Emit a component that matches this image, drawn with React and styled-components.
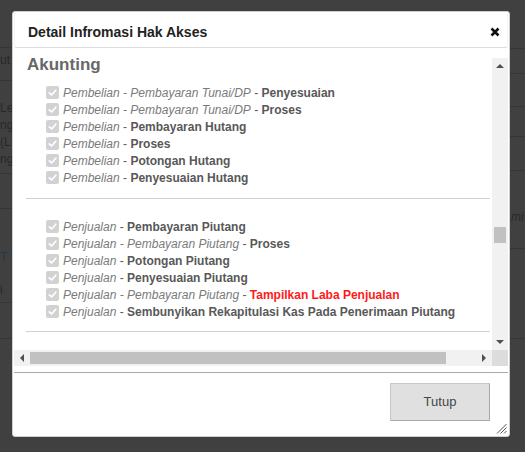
import React from 'react';
import styled, { createGlobalStyle } from 'styled-components';

const GlobalStyle = createGlobalStyle`
  html, body { margin: 0; padding: 0; }
  body {
    background: #404040;
    font-family: "Liberation Sans", Arial, sans-serif;
  }
`;

/* ---------- dimmed page behind the dialog ---------- */
const Page = styled.div`
  position: relative;
  width: 525px;
  height: 452px;
  overflow: hidden;
  background: #404040;
  display: flex;
  justify-content: space-between;
  align-items: flex-start;
`;

const Strip = styled.div`
  width: ${(p) => p.$w}px;
  display: flex;
  flex-direction: column;
`;

const StripRow = styled.div`
  box-sizing: border-box;
  height: ${(p) => p.$h}px;
  padding-top: ${(p) => p.$pt || 0}px;
  padding-left: ${(p) => p.$pl || 0}px;
  border-bottom: 1px solid #353535;
  display: flex;
  flex-direction: column;
  gap: ${(p) => p.$gap || 0}px;
  font-size: 12px;
  line-height: 17px;
  white-space: nowrap;
`;

const StripText = styled.span`
  color: ${(p) => (p.$link ? '#22384a' : '#282828')};
  font-style: ${(p) => (p.$italic ? 'italic' : 'normal')};
`;

const leftRows = [
  { h: 48 },
  { h: 33, pt: 4, lines: ['ut'] },
  { h: 93, pt: 19, lines: ['Le', 'ng', '(L', 'ng'] },
  { h: 35 },
  { h: 94, pt: 40, gap: 16, lines: ['T T', 'i'], link: true },
  { h: 36 },
];

const rightRows = [
  { h: 49 },
  { h: 25 },
  { h: 33 },
  { h: 30 },
  { h: 34 },
  { h: 78, pt: 38, lines: ['mi'], italic: true },
  { h: 90 },
];

/* ---------- dialog ---------- */
const Dialog = styled.div`
  position: absolute;
  top: 11px;
  left: 12px;
  width: 498px;
  height: 426px;
  box-sizing: border-box;
  background: #fff;
  border: 1px solid #cfcfcf;
  border-radius: 3px;
  padding: 1px;
  display: flex;
  flex-direction: column;
`;

const TitleBar = styled.div`
  box-sizing: border-box;
  height: 35px;
  padding: 3px 7px 0 13px;
  display: flex;
  align-items: center;
  justify-content: space-between;
  border: 1px solid #f4f4f4;
  border-bottom-color: #dddddd;
  border-top: none;
  border-radius: 0 0 3px 3px;
  font-size: 14px;
  font-weight: bold;
  color: #222;
`;

const CloseButton = styled.span`
  display: flex;
  width: 10px;
  height: 10px;
`;

const Body = styled.div`
  padding-top: 10px;
  margin-bottom: 6px;
`;

const ScrollFrame = styled.div`
  display: grid;
  grid-template-columns: 1fr 16px;
  grid-template-rows: 292px 16px;
`;

const Viewport = styled.div`
  overflow: hidden;
`;

const Content = styled.div`
  padding-left: 12px;
  padding-right: 2px;
`;

const Heading = styled.h3`
  margin: -2px 0 11px 1px;
  font-size: 17px;
  line-height: 17px;
  font-weight: bold;
  color: #686868;
`;

const List = styled.div`
  display: flex;
  flex-direction: column;
  padding-left: 20px;
`;

const Row = styled.div`
  height: 17px;
  display: flex;
  align-items: center;
  gap: 4px;
  font-size: 12px;
  white-space: nowrap;
`;

const Check = styled.span`
  box-sizing: border-box;
  width: 13px;
  height: 13px;
  border-radius: 2px;
  background: #d2d2d2;
  display: flex;
  align-items: center;
  justify-content: center;
  flex: none;
`;

const Label = styled.span`
  color: #5a5a5a;
`;

const PathText = styled.i`
  color: #7a7a7a;
`;

const Leaf = styled.b`
  color: ${(p) => (p.$red ? '#ff1a1a' : '#585858')};
`;

const Separator = styled.div`
  height: 1px;
  background: #d0d0d0;
  margin: ${(p) => p.$m};
`;

const VBar = styled.div`
  background: #f1f1f1;
  display: flex;
  flex-direction: column;
`;

const HBar = styled.div`
  background: #f1f1f1;
  display: flex;
`;

const Corner = styled.div`
  background: #dcdcdc;
`;

const ArrowBox = styled.div`
  width: 16px;
  height: 16px;
  flex: none;
  display: flex;
  align-items: center;
  justify-content: center;
`;

const VTrack = styled.div`
  flex: 1;
  padding-top: ${(p) => p.$offset}px;
  display: flex;
  flex-direction: column;
  align-items: center;
`;

const HTrack = styled.div`
  flex: 1;
  padding-left: ${(p) => p.$offset}px;
  display: flex;
  align-items: center;
`;

const Thumb = styled.div`
  background: #c1c1c1;
  width: ${(p) => p.$w}px;
  height: ${(p) => p.$h}px;
`;

const ButtonPane = styled.div`
  flex: 1;
  border-top: 1px solid #aaaaaa;
  display: flex;
  justify-content: flex-end;
  align-items: flex-start;
  padding: 10px 18px 0 0;
`;

const Button = styled.button`
  box-sizing: border-box;
  width: 100px;
  height: 38px;
  background: #e0e0e0;
  border: 1px solid #c8c8c8;
  border-right-color: #a8a8a8;
  border-bottom-color: #a8a8a8;
  border-radius: 1px;
  font-family: "Liberation Sans", Arial, sans-serif;
  font-size: 13px;
  color: #454545;
  padding: 0 0 1px;
`;

const Grip = styled.span`
  position: absolute;
  right: 2px;
  bottom: 2px;
  width: 11px;
  height: 11px;
  display: flex;
`;

const Arrow = ({ dir }) => {
  const pts = {
    up: '0,4 8,4 4,0',
    down: '0,0 8,0 4,4',
    left: '4,0 4,8 0,4',
    right: '0,0 0,8 4,4',
  }[dir];
  const vertical = dir === 'up' || dir === 'down';
  return (
    <svg width={vertical ? 8 : 4} height={vertical ? 4 : 8} viewBox={vertical ? '0 0 8 4' : '0 0 4 8'}>
      <polygon points={pts} fill="#505050" />
    </svg>
  );
};

const sections = [
  [
    { path: ['Pembelian', 'Pembayaran Tunai/DP'], leaf: 'Penyesuaian' },
    { path: ['Pembelian', 'Pembayaran Tunai/DP'], leaf: 'Proses' },
    { path: ['Pembelian'], leaf: 'Pembayaran Hutang' },
    { path: ['Pembelian'], leaf: 'Proses' },
    { path: ['Pembelian'], leaf: 'Potongan Hutang' },
    { path: ['Pembelian'], leaf: 'Penyesuaian Hutang' },
  ],
  [
    { path: ['Penjualan'], leaf: 'Pembayaran Piutang' },
    { path: ['Penjualan', 'Pembayaran Piutang'], leaf: 'Proses' },
    { path: ['Penjualan'], leaf: 'Potongan Piutang' },
    { path: ['Penjualan'], leaf: 'Penyesuaian Piutang' },
    { path: ['Penjualan', 'Pembayaran Piutang'], leaf: 'Tampilkan Laba Penjualan', red: true },
    { path: ['Penjualan'], leaf: 'Sembunyikan Rekapitulasi Kas Pada Penerimaan Piutang' },
  ],
];

const CheckMark = () => (
  <Check>
    <svg width="11" height="11" viewBox="0 0 11 11">
      <path d="M2.3 5.8 L4.6 8 L8.8 3.2" fill="none" stroke="#fff" strokeWidth="1.7" strokeLinecap="round" strokeLinejoin="round" />
    </svg>
  </Check>
);

export default function App() {
  return (
    <>
      <GlobalStyle />
      <Page>
        <Strip $w={40}>
          {leftRows.map((r, i) => (
            <StripRow key={i} $h={r.h} $pt={r.pt} $gap={r.gap}>
              {(r.lines || []).map((l, j) => (
                <StripText key={j} $link={r.link && j === 0}>{l}</StripText>
              ))}
            </StripRow>
          ))}
        </Strip>
        <Strip $w={15}>
          {rightRows.map((r, i) => (
            <StripRow key={i} $h={r.h} $pt={r.pt} $pl={1}>
              {(r.lines || []).map((l) => (
                <StripText key={l} $italic={r.italic}>{l}</StripText>
              ))}
            </StripRow>
          ))}
        </Strip>

        <Dialog>
          <TitleBar>
            <span>Detail Infromasi Hak Akses</span>
            <CloseButton>
              <svg width="10" height="10" viewBox="0 0 10 10">
                <path d="M1.5 1.5 L8.5 8.5 M8.5 1.5 L1.5 8.5" stroke="#111" strokeWidth="2.6" strokeLinecap="butt" />
              </svg>
            </CloseButton>
          </TitleBar>

          <Body>
            <ScrollFrame>
              <Viewport>
                <Content>
                  <Heading>Akunting</Heading>
                  {sections.map((items, si) => (
                    <React.Fragment key={si}>
                      <List>
                        {items.map((it, i) => (
                          <Row key={i}>
                            <CheckMark />
                            <Label>
                              <PathText>{it.path.join(' - ')}</PathText>
                              {' - '}
                              <Leaf $red={it.red}>{it.leaf}</Leaf>
                            </Label>
                          </Row>
                        ))}
                      </List>
                      <Separator $m={si === 0 ? '12px 0 19px 0' : '11px 0 0 0'} />
                    </React.Fragment>
                  ))}
                </Content>
              </Viewport>
              <VBar>
                <ArrowBox><Arrow dir="up" /></ArrowBox>
                <VTrack $offset={153}>
                  <Thumb $w={12} $h={16} />
                </VTrack>
                <ArrowBox><Arrow dir="down" /></ArrowBox>
              </VBar>
              <HBar>
                <ArrowBox><Arrow dir="left" /></ArrowBox>
                <HTrack $offset={0}>
                  <Thumb $w={416} $h={12} />
                </HTrack>
                <ArrowBox><Arrow dir="right" /></ArrowBox>
              </HBar>
              <Corner />
            </ScrollFrame>
          </Body>

          <ButtonPane>
            <Button type="button">Tutup</Button>
          </ButtonPane>

          <Grip>
            <svg width="11" height="11" viewBox="0 0 11 11">
              <path d="M10.5 1 L1 10.5 M10.5 4.5 L4.5 10.5 M10.5 8 L8 10.5" stroke="#555" strokeWidth="1" />
            </svg>
          </Grip>
        </Dialog>
      </Page>
    </>
  );
}
